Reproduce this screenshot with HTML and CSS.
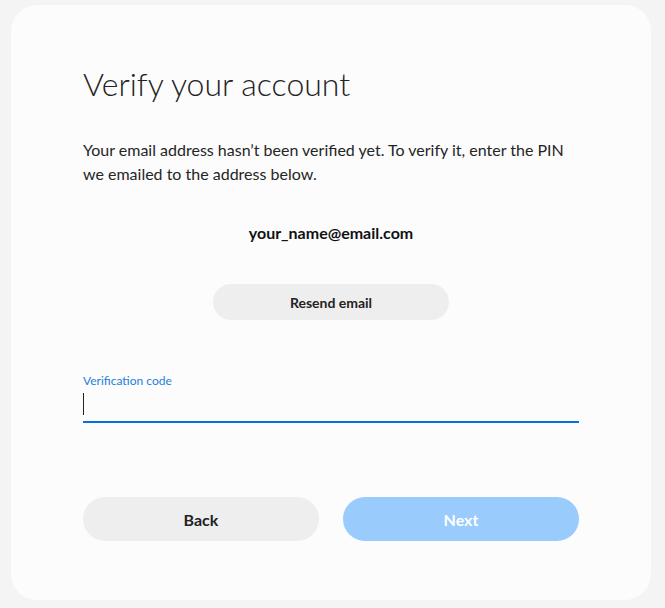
FILE: index.html
```html
<!DOCTYPE html>
<html lang="en">
<head>
<meta charset="utf-8">
<title>Verify your account</title>
<link rel="stylesheet" href="styles.css">
</head>
<body>
<main class="card">
  <h1 class="title">Verify your account</h1>
  <p class="desc">Your email address hasn’t been verified yet. To verify it, enter the PIN we emailed to the address below.</p>
  <p class="email">your_name@email.com</p>
  <div class="resend-row"><button class="btn btn-resend" type="button">Resend email</button></div>
  <div class="field">
    <label class="field-label">Verification code</label>
    <div class="field-input"><span class="caret"></span></div>
  </div>
  <div class="actions">
    <button class="btn btn-back" type="button">Back</button>
    <button class="btn btn-next" type="button">Next</button>
  </div>
</main>
</body>
</html>
```
FILE: styles.css
```css
html, body {
  margin: 0;
  padding: 0;
}
body {
  background: #f4f4f4;
  font-family: Lato, "Noto Sans", sans-serif;
  color: #252525;
  padding: 5px 14px 8px 11px;
}
.card {
  width: 640px;
  height: 595px;
  box-sizing: border-box;
  background: #fcfcfc;
  border-radius: 26px;
  padding: 59px 72px 0 72px;
  display: flex;
  flex-direction: column;
}
.title {
  margin: 0;
  font-weight: 300;
  font-size: 32px;
  line-height: 40px;
  color: #222;
}
.desc {
  margin: 34px 0 0 0;
  font-size: 16px;
  line-height: 24px;
}
.email {
  margin: 35px 0 0 0;
  text-align: center;
  font-weight: 700;
  font-size: 16px;
  line-height: 24px;
  color: #111;
}
.resend-row {
  display: flex;
  justify-content: center;
  margin-top: 39px;
}
.btn {
  border: none;
  font-family: inherit;
  font-weight: 700;
  cursor: pointer;
}
.btn-resend {
  width: 236px;
  height: 36px;
  border-radius: 18px;
  background: #eeeeee;
  font-size: 14px;
  color: #222;
}
.field {
  margin-top: 53px;
  display: flex;
  flex-direction: column;
}
.field-label {
  font-size: 12px;
  line-height: 16px;
  color: #1a7fdc;
}
.field-input {
  height: 26px;
  border-bottom: 2px solid #0072de;
  display: flex;
  align-items: flex-end;
  padding-bottom: 6px;
  box-sizing: content-box;
}
.caret {
  width: 1px;
  height: 22px;
  background: #222;
}
.actions {
  margin-top: 74px;
  display: flex;
  gap: 24px;
}
.actions .btn {
  flex: 1;
  height: 44px;
  border-radius: 22px;
  font-size: 16px;
}
.btn-back {
  background: #eeeeee;
  color: #222;
}
.btn-next {
  background: #99cbfd;
  color: #fff;
}
```
